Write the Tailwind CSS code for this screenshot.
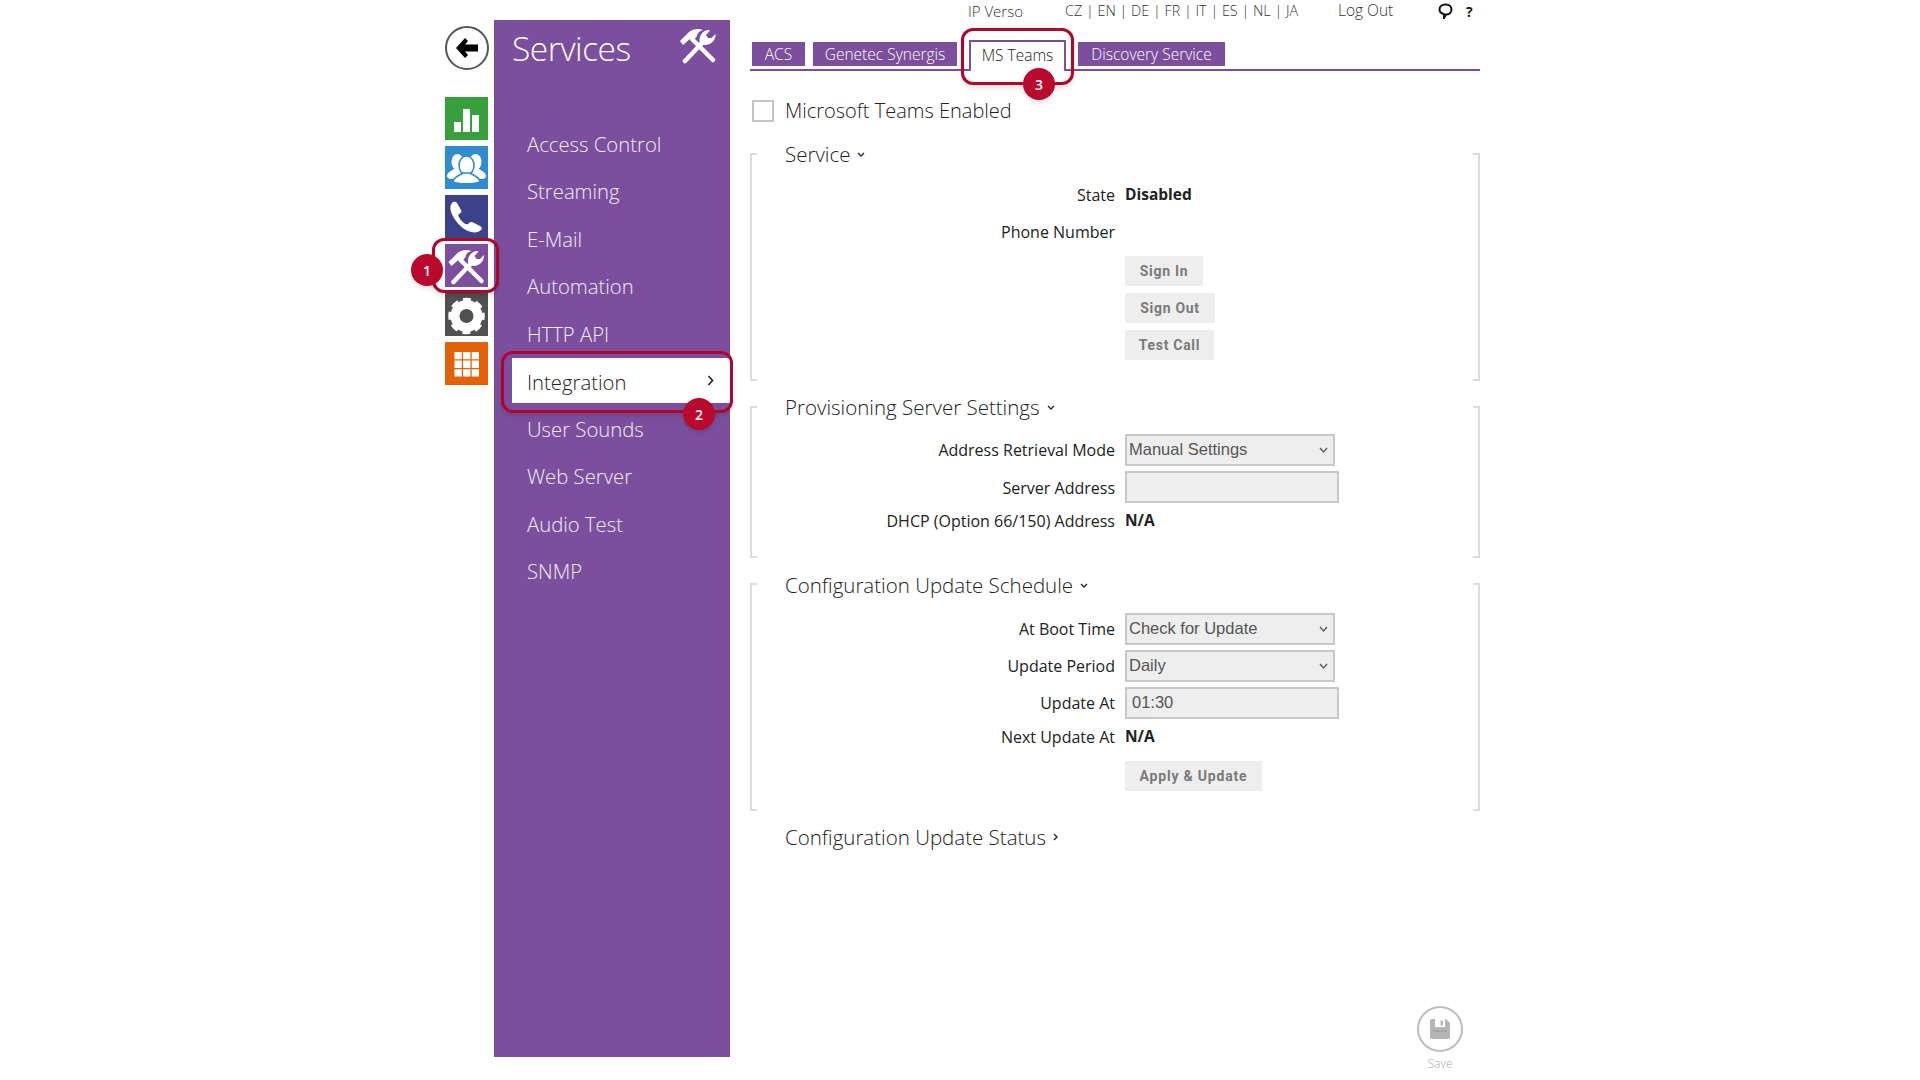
<!DOCTYPE html>
<html lang="en">
<head>
  <meta charset="UTF-8" />
  <title>Services - MS Teams</title>
  <script src="https://cdn.jsdelivr.net/npm/@tailwindcss/browser@4"></script>
</head>
<body class="bg-white">
  <svg class="hidden">
    <symbol id="tools" viewBox="0 0 40 37">
      <path d="M14 12 L35 33" stroke="#fff" stroke-width="4.500" stroke-linecap="round" fill="none" />
      <path d="M7 34 L26 14" stroke="#fff" stroke-width="4.500" stroke-linecap="round" fill="none" />
      <path d="M2 14 L11 5 C15 2 20 1 25 3 C21 4 19 7 19 9 L16 13 L13 11 L5 18 Z" fill="#fff" />
      <path d="M22 17 C20 10 24 3 31 3 L32 3.500 L28 8 L30 11 L33.500 11 L37.500 7 C38 12 34 18 27 18 Z" fill="#fff" />
    </symbol>
  </svg>

  <div class="relative flex w-[1920px] h-[1080px] overflow-hidden pl-[445px] bg-white text-[#222] font-['Open_Sans',sans-serif]">

    <!-- Icon rail -->
    <nav class="w-[43px] shrink-0">
      <div class="flex items-center justify-center w-[44px] h-[44px] mt-[26px] rounded-full border-2 border-[#555] bg-white">
        <svg class="w-[24px] h-[22px]" viewBox="0 0 24 22"><path d="M10 1 L1 11 L10 21 L13 18 L10 14.500 L23 14.500 L23 7.500 L10 7.500 L13 4 Z" fill="#000" /></svg>
      </div>
      <div class="flex flex-col gap-[6px] mt-[27px]">
        <a class="block w-[43px] h-[43px] bg-[#37a03c]">
          <svg viewBox="0 0 43 43"><path d="M9 25h7v10H9zM18 12h7v23h-7zM27 18h7v17h-7z" fill="#fff" /></svg>
        </a>
        <a class="block w-[43px] h-[43px] bg-[#2e8ccf]">
          <svg viewBox="0 0 43 43">
            <g fill="#fff">
              <ellipse cx="12.500" cy="16" rx="6" ry="8" />
              <path d="M2 30 C2 26 7 25 10 22 L16 22 L18 33 L6 33 C4 33 2 32 2 30 Z" />
              <ellipse cx="30.500" cy="16" rx="6" ry="8" />
              <path d="M41 30 C41 26 36 25 33 22 L27 22 L25 33 L37 33 C39 33 41 32 41 30 Z" />
            </g>
            <g fill="#fff" stroke="#2e8ccf" stroke-width="1.600">
              <ellipse cx="21.500" cy="19.500" rx="7.500" ry="9.500" />
              <path d="M8 36 C8 31 14 30 18 27 L25 27 C29 30 35 31 35 36 C30 38.500 13 38.500 8 36 Z" />
            </g>
          </svg>
        </a>
        <a class="block w-[43px] h-[43px] bg-[#3c4289]">
          <svg viewBox="0 0 43 43"><path d="M7 8 C9 6 11 7 12 8 L16 15 C17 17 16 18 14 19 C13 20 13 21 15 24 C18 28 21 30 23 29 C24 28 25 26.500 27 27 L35 31 C37 32 37.500 34 36 35 C33 38 28 38 23 36 C16 33 9 25 6 17 C5 13 5 10 7 8 Z" fill="#fff" /></svg>
        </a>
        <a class="block w-[43px] h-[43px] bg-[#7b4f9d]">
          <svg viewBox="0 0 43 43"><use href="#tools" x="1" y="4" width="41" height="37" /></svg>
        </a>
        <a class="block w-[43px] h-[43px] bg-[#515151]">
          <svg viewBox="0 0 43 43">
            <circle cx="21.500" cy="23" r="11.500" stroke="#fff" stroke-width="9" fill="none" />
            <circle cx="21.500" cy="23" r="15.500" stroke="#fff" stroke-width="5.500" stroke-dasharray="7.400 4.770" stroke-dashoffset="3.700" fill="none" />
          </svg>
        </a>
        <a class="block w-[43px] h-[43px] bg-[#e36209]">
          <svg viewBox="0 0 43 43"><path d="M9.500 10h7.300v7.300H9.500zM18.100 10h7.300v7.300h-7.300zM26.700 10h7.300v7.300h-7.300zM9.500 18.600h7.300v7.300H9.500zM18.100 18.600h7.300v7.300h-7.300zM26.700 18.600h7.300v7.300h-7.300zM9.500 27.200h7.300v7.300H9.500zM18.100 27.200h7.300v7.300h-7.300zM26.700 27.200h7.300v7.300h-7.300z" fill="#fff" /></svg>
        </a>
      </div>
    </nav>

    <!-- Services menu -->
    <aside class="w-[236px] h-[1037px] shrink-0 ml-[6px] mt-[20px] bg-[#7b4f9d] text-white">
      <div class="flex items-center justify-between h-[56px] pl-[18px] pr-[12px]">
        <h1 class="text-[33.5px] font-light tracking-[-0.5px]">Services</h1>
        <svg class="w-[40px] h-[37px] -mt-[5px]" viewBox="0 0 40 37"><use href="#tools" /></svg>
      </div>
      <ul class="mt-[44px] text-[20.3px] font-light text-white/90">
        <li class="flex items-center h-[47.5px] pl-[33px]">Access Control</li>
        <li class="flex items-center h-[47.5px] pl-[33px]">Streaming</li>
        <li class="flex items-center h-[47.5px] pl-[33px]">E-Mail</li>
        <li class="flex items-center h-[47.5px] pl-[33px]">Automation</li>
        <li class="flex items-center h-[47.5px] pl-[33px]">HTTP API</li>
        <li class="flex items-center justify-between h-[45px] mt-[0.5px] mb-[2px] ml-[18px] pt-[4px] pl-[15px] pr-[16px] bg-white text-[#222]">
          Integration
          <svg class="w-[7px] h-[11px] -mt-[4px]" viewBox="0 0 7 11"><path d="M1.500 1 L5.500 5.500 L1.500 10" stroke="#222" stroke-width="1.600" fill="none" /></svg>
        </li>
        <li class="flex items-center h-[47.5px] pl-[33px]">User Sounds</li>
        <li class="flex items-center h-[47.5px] pl-[33px]">Web Server</li>
        <li class="flex items-center h-[47.5px] pl-[33px]">Audio Test</li>
        <li class="flex items-center h-[47.5px] pl-[33px]">SNMP</li>
      </ul>
    </aside>

    <!-- Main -->
    <main class="w-[730px] shrink-0 ml-[20px]">
      <div class="flex items-center h-[22px] text-[15px] font-light text-[#333]">
        <span class="ml-[218px] w-[97px]">IP Verso</span>
        <span class="w-[273px] text-[14.4px]">CZ | EN | DE | FR | IT | ES | NL | JA</span>
        <span class="w-[100px] text-[15.5px]">Log Out</span>
        <svg class="w-[15px] h-[16px] mr-[13px]" viewBox="0 0 15 16"><path d="M7.500 1.500 C11 1.500 13.500 3.500 13.500 6.500 C13.500 9.500 11 11.500 8 11.500 L6 15 L6 11.200 C3.500 10.500 1.500 9 1.500 6.500 C1.500 3.500 4 1.500 7.500 1.500 Z" stroke="#111" stroke-width="2" fill="none" /></svg>
        <span class="text-[14px] font-bold text-[#111]">?</span>
      </div>

      <div class="flex items-end h-[31px] mt-[18px] pl-[2px] border-b-2 border-[#7b4f9d] text-[15.5px] font-light">
        <a class="flex items-center justify-center w-[53px] h-[24px] mb-[3px] pt-[2px] bg-[#7b4f9d] text-white">ACS</a>
        <a class="flex items-center justify-center w-[144px] h-[24px] mb-[3px] ml-[8px] pt-[2px] bg-[#7b4f9d] text-white">Genetec Synergis</a>
        <a class="flex items-center justify-center w-[97px] h-[31px] -mb-[2px] ml-[12px] pb-[2px] border-x-2 border-t-2 border-[#7b4f9d] bg-white text-[#222]">MS Teams</a>
        <a class="flex items-center justify-center w-[147px] h-[24px] mb-[3px] ml-[12px] pt-[2px] bg-[#7b4f9d] text-white">Discovery Service</a>
      </div>

      <label class="flex items-center gap-[11px] h-[22px] mt-[29px] ml-[2px] text-[20px] font-light">
        <span class="w-[22px] h-[22px] border-2 border-[#c4c4c4] bg-white"></span>
        Microsoft Teams Enabled
      </label>

      <!-- Service -->
      <section class="relative flow-root mt-[31px] pb-[21px]">
        <span class="absolute inset-y-0 left-0 w-[7px] border-l-2 border-y-2 border-[#dcdcdc]"></span>
        <span class="absolute inset-y-0 right-0 w-[7px] border-r-2 border-y-2 border-[#dcdcdc]"></span>
        <h2 class="flex items-center gap-[7px] h-[30px] -mt-[13px] pb-[2px] pl-[35px] text-[20.5px] font-light">
          Service
          <svg class="w-[8px] h-[5px]" viewBox="0 0 8 5"><path d="M1 1 L4 4 L7 1" stroke="#222" stroke-width="1.300" fill="none" /></svg>
        </h2>
        <div class="flex items-center h-[30px] mt-[10px] text-[16px]">
          <span class="w-[365px] text-right">State</span>
          <b class="ml-[10px] text-[15.5px] font-bold">Disabled</b>
        </div>
        <div class="flex items-center h-[30px] mt-[7px] text-[16px]">
          <span class="w-[365px] text-right">Phone Number</span>
        </div>
        <div class="ml-[375px] mt-[9px] flex flex-col items-start gap-[7px] text-[14px] font-bold font-['Roboto',sans-serif] text-[#7a7a7a]">
          <button class="w-[78px] h-[30px] bg-[#eee] tracking-[0.7px]">Sign In</button>
          <button class="w-[90px] h-[30px] bg-[#eee] tracking-[0.7px]">Sign Out</button>
          <button class="w-[89px] h-[30px] bg-[#eee] tracking-[0.7px]">Test Call</button>
        </div>
      </section>

      <!-- Provisioning Server Settings -->
      <section class="relative flow-root mt-[25px] pb-[22px]">
        <span class="absolute inset-y-0 left-0 w-[7px] border-l-2 border-y-2 border-[#dcdcdc]"></span>
        <span class="absolute inset-y-0 right-0 w-[7px] border-r-2 border-y-2 border-[#dcdcdc]"></span>
        <h2 class="flex items-center gap-[7px] h-[30px] -mt-[13px] pb-[2px] pl-[35px] text-[20.5px] font-light">
          Provisioning Server Settings
          <svg class="w-[8px] h-[5px]" viewBox="0 0 8 5"><path d="M1 1 L4 4 L7 1" stroke="#222" stroke-width="1.300" fill="none" /></svg>
        </h2>
        <div class="flex items-center h-[32px] mt-[11px] text-[16px]">
          <span class="w-[365px] text-right">Address Retrieval Mode</span>
          <div class="relative ml-[10px] w-[210px] h-[32px]">
            <select class="w-full h-full pl-[2px] pb-[2px] appearance-none border-2 border-[#c8c8c8] bg-[#eee] text-[16.5px] text-[#555] font-['Liberation_Sans',sans-serif]"><option>Manual Settings</option></select>
            <svg class="absolute right-[7px] top-[13px] w-[9px] h-[6px]" viewBox="0 0 9 6"><path d="M1 1 L4.500 5 L8 1" stroke="#555" stroke-width="1.200" fill="none" /></svg>
          </div>
        </div>
        <div class="flex items-center h-[32px] mt-[5px] text-[16px]">
          <span class="w-[365px] text-right pt-[1px]">Server Address</span>
          <input class="ml-[10px] w-[214px] h-[32px] border-2 border-[#c8c8c8] bg-[#eee]" />
        </div>
        <div class="flex items-center h-[30px] mt-[3px] text-[16px]">
          <span class="w-[365px] text-right">DHCP (Option 66/150) Address</span>
          <b class="ml-[10px] text-[15.5px] font-bold">N/A</b>
        </div>
      </section>

      <!-- Configuration Update Schedule -->
      <section class="relative flow-root mt-[25px] pb-[20px]">
        <span class="absolute inset-y-0 left-0 w-[7px] border-l-2 border-y-2 border-[#dcdcdc]"></span>
        <span class="absolute inset-y-0 right-0 w-[7px] border-r-2 border-y-2 border-[#dcdcdc]"></span>
        <h2 class="flex items-center gap-[7px] h-[30px] -mt-[13px] pl-[35px] text-[20.5px] font-light">
          Configuration Update Schedule
          <svg class="w-[8px] h-[5px]" viewBox="0 0 8 5"><path d="M1 1 L4 4 L7 1" stroke="#222" stroke-width="1.300" fill="none" /></svg>
        </h2>
        <div class="flex items-center h-[32px] mt-[13px] text-[16px]">
          <span class="w-[365px] text-right">At Boot Time</span>
          <div class="relative ml-[10px] w-[210px] h-[32px]">
            <select class="w-full h-full pl-[2px] pb-[2px] appearance-none border-2 border-[#c8c8c8] bg-[#eee] text-[16.5px] text-[#555] font-['Liberation_Sans',sans-serif]"><option>Check for Update</option></select>
            <svg class="absolute right-[7px] top-[13px] w-[9px] h-[6px]" viewBox="0 0 9 6"><path d="M1 1 L4.500 5 L8 1" stroke="#555" stroke-width="1.200" fill="none" /></svg>
          </div>
        </div>
        <div class="flex items-center h-[32px] mt-[5px] text-[16px]">
          <span class="w-[365px] text-right">Update Period</span>
          <div class="relative ml-[10px] w-[210px] h-[32px]">
            <select class="w-full h-full pl-[2px] pb-[2px] appearance-none border-2 border-[#c8c8c8] bg-[#eee] text-[16.5px] text-[#555] font-['Liberation_Sans',sans-serif]"><option>Daily</option></select>
            <svg class="absolute right-[7px] top-[13px] w-[9px] h-[6px]" viewBox="0 0 9 6"><path d="M1 1 L4.500 5 L8 1" stroke="#555" stroke-width="1.200" fill="none" /></svg>
          </div>
        </div>
        <div class="flex items-center h-[32px] mt-[5px] text-[16px]">
          <span class="w-[365px] text-right">Update At</span>
          <input value="01:30" class="ml-[10px] w-[214px] h-[32px] pl-[5px] pb-[2px] border-2 border-[#c8c8c8] bg-[#eee] text-[16.5px] text-[#555] font-['Liberation_Sans',sans-serif]" />
        </div>
        <div class="flex items-center h-[30px] mt-[3px] text-[16px]">
          <span class="w-[365px] text-right">Next Update At</span>
          <b class="ml-[10px] text-[15.5px] font-bold">N/A</b>
        </div>
        <button class="block ml-[375px] mt-[9px] w-[137px] h-[30px] bg-[#eee] text-[14px] font-bold font-['Roboto',sans-serif] text-[#7a7a7a] tracking-[0.8px]">Apply &amp; Update</button>
      </section>

      <h2 class="flex items-center gap-[7px] h-[30px] mt-[12px] pb-[2px] pl-[35px] text-[20.5px] font-light">
        Configuration Update Status
        <svg class="w-[5px] h-[8px]" viewBox="0 0 5 8"><path d="M1 1 L4 4 L1 7" stroke="#222" stroke-width="1.300" fill="none" /></svg>
      </h2>
    </main>

    <!-- Save button -->
    <div class="absolute left-[1417px] top-[1006px] flex flex-col items-center w-[46px]">
      <div class="flex items-center justify-center w-[46px] h-[46px] rounded-full border-2 border-[#bdbdbd] bg-white">
        <svg class="w-[20px] h-[20px]" viewBox="0 0 20 20"><path d="M2 0h14l4 4v14a2 2 0 0 1-2 2H2a2 2 0 0 1-2-2V2a2 2 0 0 1 2-2z" fill="#b5b5b5" /><path d="M5 0h10v8H5z" fill="#fff" /><path d="M10.500 1.500h2.500v5h-2.500z" fill="#b5b5b5" /><path d="M3 12h14" stroke="#9a9a9a" stroke-width="1" /></svg>
      </div>
      <span class="mt-[3px] text-[12px] font-light text-[#aaa]">Save</span>
    </div>

    <!-- Callouts -->
    <div class="absolute left-[432px] top-[238px] w-[67px] h-[55px] rounded-[12px] border-[3px] border-[#b1062c] shadow-md"></div>
    <div class="absolute left-[501px] top-[351px] w-[232px] h-[62px] rounded-[12px] border-[3px] border-[#b1062c] shadow-md"></div>
    <div class="absolute left-[961px] top-[28px] w-[113px] h-[57px] rounded-[12px] border-[3px] border-[#b1062c] shadow-md"></div>
    <div class="absolute left-[411px] top-[254px] flex items-center justify-center w-[32px] h-[32px] rounded-full bg-[#b90a2e] text-white text-[14px] font-semibold shadow-md">1</div>
    <div class="absolute left-[683px] top-[398px] flex items-center justify-center w-[32px] h-[32px] rounded-full bg-[#b90a2e] text-white text-[14px] font-semibold shadow-md">2</div>
    <div class="absolute left-[1023px] top-[68px] flex items-center justify-center w-[32px] h-[32px] rounded-full bg-[#b90a2e] text-white text-[14px] font-semibold shadow-md">3</div>
  </div>
</body>
</html>
